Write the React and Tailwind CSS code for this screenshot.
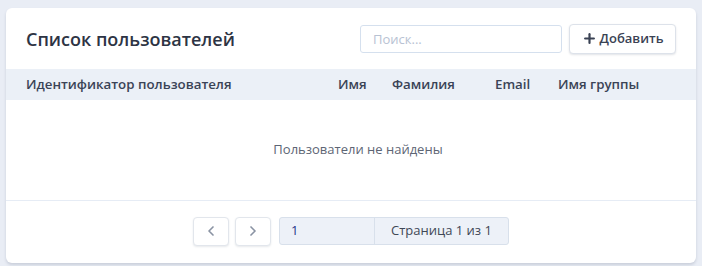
import React from 'react';
import { Plus, ChevronLeft, ChevronRight } from 'lucide-react';

const columns = [
  { label: 'Идентификатор пользователя', width: 'w-[312px]' },
  { label: 'Имя', width: 'w-[54px]' },
  { label: 'Фамилия', width: 'w-[103px]' },
  { label: 'Email', width: 'w-[63px]' },
  { label: 'Имя группы', width: 'flex-1' },
];

const App = () => {
  return (
    <div className="min-h-[266px] bg-[#e9edf5] px-[6px] pt-[8px] pb-[4px] font-['Open_Sans',sans-serif]">
      <div className="bg-white rounded-md shadow-[0_2px_3px_rgba(60,72,100,0.18)] overflow-hidden">
        {/* header */}
        <div className="h-[61px] flex items-center justify-between pl-[20px] pr-[20px]">
          <h1 className="text-[18px] font-semibold text-[#2d3444] mt-[2px]">Список пользователей</h1>
          <div className="flex items-center gap-[7px]">
            <input
              type="text"
              placeholder="Поиск..."
              className="w-[202px] h-[28px] border border-[#d5e0ee] rounded-[3px] px-[12px] text-[13px] text-[#2d3444] placeholder:text-[#b8c2d3] outline-none"
            />
            <button className="h-[30px] w-[107px] flex items-center justify-center gap-[3px] border border-[#dde2ea] rounded-[4px] bg-white shadow-[0_1px_2px_rgba(60,72,100,0.15)] text-[13px] font-semibold text-[#3a4254]">
              <Plus className="w-[15px] h-[15px]" strokeWidth={3.5} />
              Добавить
            </button>
          </div>
        </div>

        {/* table head */}
        <div className="h-[31px] bg-[#ebf0f7] flex items-center pl-[20px] pr-[20px]">
          {columns.map((col) => (
            <div key={col.label} className={`${col.width} text-[13.3px] font-semibold text-[#3a4356] whitespace-nowrap`}>
              {col.label}
            </div>
          ))}
        </div>

        {/* empty body */}
        <div className="h-[101px] flex items-center justify-center pl-[14px] border-b border-[#e6ecf5]">
          <span className="text-[13px] text-[#5d6574]">Пользователи не найдены</span>
        </div>

        {/* pagination */}
        <div className="h-[62px] flex items-center justify-center gap-[6px] pb-[2px]">
          <button className="w-[36px] h-[29px] flex items-center justify-center border border-[#e2e6ec] rounded-[4px] bg-white shadow-[0_1px_2px_rgba(60,72,100,0.12)] text-[#8a93a3]">
            <ChevronLeft className="w-[16px] h-[16px]" strokeWidth={2.5} />
          </button>
          <button className="w-[36px] h-[29px] flex items-center justify-center border border-[#e2e6ec] rounded-[4px] bg-white shadow-[0_1px_2px_rgba(60,72,100,0.12)] text-[#8a93a3]">
            <ChevronRight className="w-[16px] h-[16px]" strokeWidth={2.5} />
          </button>
          <div className="ml-[2px] w-[230px] h-[28px] flex border border-[#d8e0eb] rounded-[3px] bg-[#edf1f8]">
            <div className="w-[95px] flex items-center pl-[11px] border-r border-[#d8e0eb] text-[13px] text-[#26348a]">1</div>
            <div className="flex-1 flex items-center justify-center text-[13px] text-[#3f4756]">Страница 1 из 1</div>
          </div>
        </div>
      </div>
    </div>
  );
};

export default App;
